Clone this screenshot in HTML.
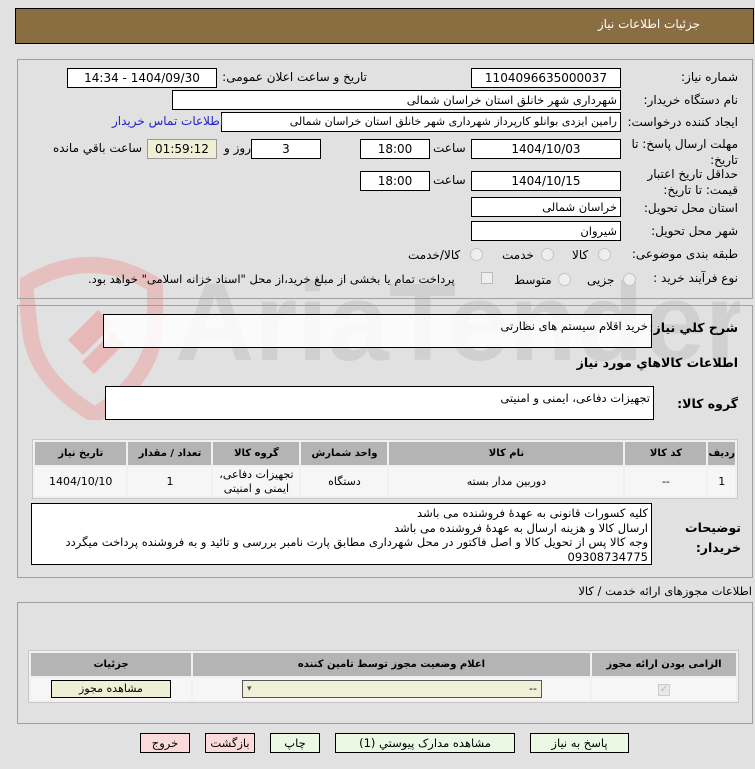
<!DOCTYPE html>
<html><head><meta charset="utf-8"><style>
*{box-sizing:border-box;margin:0;padding:0}
body{width:755px;height:769px;background:#e1e1e1;font-family:"DejaVu Sans","Liberation Sans",sans-serif;font-size:11px;color:#000;position:relative;overflow:hidden;direction:rtl}
.a{position:absolute;white-space:nowrap}
.box{position:absolute;background:#fff;border:1px solid #000;height:20px;line-height:18px;font-size:12px;padding:0 3px;text-align:center;white-space:nowrap;overflow:hidden}
.l{text-align:right;font-size:11.5px}
.lab{position:absolute;white-space:nowrap;font-size:12px;text-align:right}
.panel{position:absolute;border:1px solid #a0a0a0}
table{border-collapse:separate;border-spacing:2px;position:absolute;background:#f0f0f0;border:1px solid #c8c8c8}
th{background:#b4b4b4;font-weight:bold;font-size:10px;height:23px}
td{background:#f6f6f6;text-align:center;font-size:11px}
.btn{position:absolute;height:20px;border:1px solid #000;text-align:center;line-height:18px;font-size:11.5px}
.radio{position:absolute;width:13px;height:13px;border-radius:50%;border:1px solid #c4c4c4;background:#eee}
.ta{position:absolute;background:#fff;border:1px solid #000;padding:3px;font-size:11.5px;text-align:right;line-height:16px}
</style></head><body>
<div class="a" style="left:15px;top:8px;width:739px;height:36px;background:#8b6d42;border:1px solid #000"></div>
<div class="a" style="right:55px;top:17px;color:#fff;font-size:12px">جزئیات اطلاعات نیاز</div>

<svg class="a" style="left:20px;top:250px" width="720" height="170" viewBox="0 0 720 170">
<path d="M5 35 Q70 -5 135 35 L135 80 Q130 130 75 165 Q15 130 10 80 Z" fill="none" stroke="#e6b8b8" stroke-width="16" opacity="0.85"/>
<path d="M48 90 l30 -30 l15 15 l-30 30z M62 112 l30 -30 l12 12 l-30 30z" fill="#e6b8b8"/>
<text x="155" y="110" font-family="Liberation Sans" font-size="110" font-weight="bold" fill="#cfcfcf" opacity="0.9" style="direction:ltr">AriaTender.neT</text>
</svg>

<div class="panel" style="left:17px;top:59px;width:736px;height:240px"></div>
<div class="panel" style="left:17px;top:305px;width:736px;height:273px"></div>

<div class="lab" style="right:17px;top:70px">شماره نیاز:</div>
<div class="box" style="left:471px;top:68px;width:150px">1104096635000037</div>
<div class="lab" style="right:388px;top:70px">تاریخ و ساعت اعلان عمومی:</div>
<div class="box" style="left:67px;top:68px;width:150px">1404/09/30 - 14:34</div>

<div class="lab" style="right:17px;top:93px">نام دستگاه خریدار:</div>
<div class="box l" style="left:172px;top:90px;width:449px">شهرداری شهر خانلق استان خراسان شمالی</div>

<div class="lab" style="right:17px;top:115px">ایجاد کننده درخواست:</div>
<div class="box l" style="left:221px;top:112px;width:400px;font-size:11px">رامین ایزدی بوانلو کارپرداز شهرداری شهر خانلق استان خراسان شمالی</div>
<div class="lab" style="left:112px;top:114px;color:#2222cc">اطلاعات تماس خریدار</div>

<div class="lab" style="right:17px;top:136px;line-height:16px">مهلت ارسال پاسخ: تا<br>تاریخ:</div>
<div class="box" style="left:471px;top:139px;width:150px">1404/10/03</div>
<div class="lab" style="left:433px;top:141px">ساعت</div>
<div class="box" style="left:360px;top:139px;width:70px">18:00</div>
<div class="box" style="left:251px;top:139px;width:70px">3</div>
<div class="lab" style="left:224px;top:141px">روز و</div>
<div class="box" style="left:147px;top:139px;width:70px;background:#efefd5;border-color:#999">01:59:12</div>
<div class="lab" style="left:53px;top:141px">ساعت باقي مانده</div>

<div class="lab" style="right:17px;top:166px;line-height:16px">حداقل تاریخ اعتبار<br>قیمت: تا تاریخ:</div>
<div class="box" style="left:471px;top:171px;width:150px">1404/10/15</div>
<div class="lab" style="left:433px;top:173px">ساعت</div>
<div class="box" style="left:360px;top:171px;width:70px">18:00</div>

<div class="lab" style="right:17px;top:201px">استان محل تحویل:</div>
<div class="box l" style="left:471px;top:197px;width:150px">خراسان شمالی</div>
<div class="lab" style="right:17px;top:224px">شهر محل تحویل:</div>
<div class="box l" style="left:471px;top:221px;width:150px">شیروان</div>

<div class="lab" style="right:17px;top:247px">طبقه بندی موضوعی:</div>
<div class="radio" style="left:598px;top:248px"></div><div class="lab" style="left:572px;top:248px">کالا</div>
<div class="radio" style="left:541px;top:248px"></div><div class="lab" style="left:502px;top:248px">خدمت</div>
<div class="radio" style="left:470px;top:248px"></div><div class="lab" style="left:408px;top:248px">کالا/خدمت</div>

<div class="lab" style="right:17px;top:271px">نوع فرآیند خرید :</div>
<div class="radio" style="left:623px;top:273px"></div><div class="lab" style="left:587px;top:273px">جزیی</div>
<div class="radio" style="left:558px;top:273px"></div><div class="lab" style="left:514px;top:273px">متوسط</div>
<div class="a" style="left:481px;top:272px;width:12px;height:12px;border:1px solid #bbb;background:#eee"></div>
<div class="lab" style="left:88px;top:272px;font-size:11.5px">پرداخت تمام یا بخشی از مبلغ خرید،از محل "اسناد خزانه اسلامی" خواهد بود.</div>

<div class="lab" style="right:17px;top:320px;font-weight:bold;font-size:12.5px">شرح کلي نياز:</div>
<div class="ta" style="left:103px;top:314px;width:549px;height:34px;background:rgba(255,255,255,0.85)">خرید اقلام سیستم های نظارتی</div>
<div class="lab" style="right:17px;top:355px;font-weight:bold;font-size:12.5px">اطلاعات کالاهاي مورد نياز</div>
<div class="lab" style="right:17px;top:396px;font-weight:bold;font-size:12.5px">گروه کالا:</div>
<div class="ta" style="left:105px;top:386px;width:549px;height:34px">تجهیزات دفاعی، ایمنی و امنیتی</div>

<table style="left:32px;top:439px;width:706px">
<tr><th style="width:26px">ردیف</th><th style="width:81px">کد کالا</th><th style="width:234px">نام کالا</th><th style="width:86px">واحد شمارش</th><th style="width:86px">گروه کالا</th><th style="width:83px">تعداد / مقدار</th><th>تاریخ نیاز</th></tr>
<tr style="height:29px"><td>1</td><td>--</td><td>دوربین مدار بسته</td><td>دستگاه</td><td style="line-height:14px">تجهیزات دفاعی،<br>ایمنی و امنیتی</td><td>1</td><td>1404/10/10</td></tr>
</table>

<div class="lab" style="right:14px;top:518px;font-weight:bold;line-height:20px;font-size:12.5px">توضیحات<br>خریدار:</div>
<div class="ta" style="left:31px;top:503px;width:621px;height:62px;padding:2px 3px;line-height:14.5px">کلیه کسورات قانونی به عهدهٔ فروشنده می باشد<br>ارسال کالا و هزینه ارسال به عهدهٔ فروشنده می باشد<br>وجه  کالا پس از تحویل کالا و اصل فاکتور در محل شهرداری مطابق پارت نامبر بررسی و تائید و به فروشنده پرداخت میگردد<br>09308734775</div>

<div class="lab" style="right:3px;top:584px;font-size:11.5px">اطلاعات مجوزهای ارائه خدمت / کالا</div>
<div class="panel" style="left:17px;top:602px;width:736px;height:122px"></div>
<table style="left:28px;top:650px;width:711px">
<tr><th style="width:144px">الزامی بودن ارائه مجوز</th><th>اعلام وضعیت مجوز توسط تامین کننده</th><th style="width:160px">جزئیات</th></tr>
<tr style="height:22px"><td><span style="display:inline-block;width:12px;height:12px;border:1px solid #ccc;background:#e8e8e8;color:#bbb;font-size:10px;line-height:10px">✓</span></td><td><div style="margin-right:48px;width:300px;height:18px;border:1px solid #555;background:#f0efd8;text-align:right;padding:0 4px;line-height:16px;position:relative">--<span style="position:absolute;left:4px;font-size:9px;color:#555">▾</span></div></td><td><div style="width:120px;height:18px;margin:0 auto;border:1px solid #000;background:#efefd5;line-height:16px">مشاهده مجوز</div></td></tr>
</table>

<div class="btn" style="left:530px;top:733px;width:99px;background:#eaf8e4">پاسخ به نیاز</div>
<div class="btn" style="left:335px;top:733px;width:180px;background:#eaf8e4">مشاهده مدارک پیوستي (1)</div>
<div class="btn" style="left:270px;top:733px;width:50px;background:#eaf8e4">چاپ</div>
<div class="btn" style="left:205px;top:733px;width:50px;background:#fbdada">بازگشت</div>
<div class="btn" style="left:140px;top:733px;width:50px;background:#fbdada">خروج</div>
</body></html>
